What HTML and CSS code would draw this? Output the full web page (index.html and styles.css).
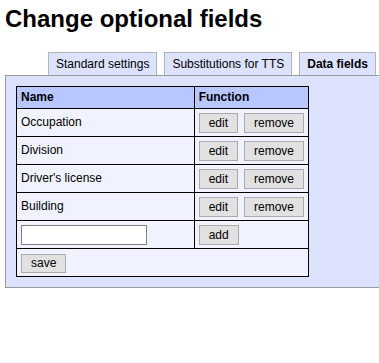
FILE: index.html
```html
<!DOCTYPE html>
<html lang="en">

<head>
  <meta charset="UTF-8">
  <title>Change optional fields</title>
  <link rel="stylesheet" href="styles.css">
</head>

<body>
  <div class="page">
    <h1 class="title">Change optional fields</h1>

    <!-- tabs -->
    <ul class="tabs">
      <li class="tab">Standard settings</li>
      <li class="tab">Substitutions for TTS</li>
      <li class="tab tab-active">Data fields</li>
    </ul>

    <div class="panel">
      <table class="fields">
        <tr>
          <th class="col-name">Name</th>
          <th class="col-func">Function</th>
        </tr>
        <tr>
          <td>Occupation</td>
          <td><div class="actions"><button class="btn">edit</button><button class="btn">remove</button></div></td>
        </tr>
        <tr>
          <td>Division</td>
          <td><div class="actions"><button class="btn">edit</button><button class="btn">remove</button></div></td>
        </tr>
        <tr>
          <td>Driver's license</td>
          <td><div class="actions"><button class="btn">edit</button><button class="btn">remove</button></div></td>
        </tr>
        <tr>
          <td>Building</td>
          <td><div class="actions"><button class="btn">edit</button><button class="btn">remove</button></div></td>
        </tr>
        <tr>
          <td><input class="field-input" type="text"></td>
          <td><div class="actions"><button class="btn">add</button></div></td>
        </tr>
        <tr>
          <td colspan="2"><button class="btn btn-save">save</button></td>
        </tr>
      </table>
    </div>
  </div>
</body>

</html>
```

FILE: styles.css
```css
* {
  margin: 0;
  padding: 0;
  box-sizing: border-box;
}

body {
  font-family: "Liberation Sans", Arial, sans-serif;
  font-size: 12px;
  color: #000;
  background-color: #fff;
}

.page {
  padding: 5px 0 0 5px;
}

.title {
  font-size: 24px;
  font-weight: bold;
  line-height: 27px;
}

/* tabs */
.tabs {
  list-style: none;
  display: flex;
  gap: 7px;
  margin-top: 20px;
  padding-left: 43px;
}

.tab {
  flex-shrink: 0;
  white-space: nowrap;
  height: 23px;
  padding: 4px 7px 0;
  line-height: 15px;
  font-size: 12px;
  background-color: #dde3ff;
  border: 1px solid #b4b4b4;
  border-bottom: none;
}

.tab-active {
  font-weight: bold;
}

/* panel runs off the right edge, so no right border */
.panel {
  padding: 10px;
  background-color: #dde3ff;
  border: 1px solid #9a9a9a;
  border-right: none;
}

/* table */
.fields {
  border-collapse: collapse;
  width: 293px;
}

.fields th,
.fields td {
  border: 1px solid #000;
  padding: 3px 4px;
  text-align: left;
  line-height: 15px;
  background-color: #f0f3ff;
}

.fields th {
  background-color: #b8c7ff;
  font-size: 12px;
}

.fields td {
  height: 28px;
}

.col-name {
  width: 178px;
}

.actions {
  display: flex;
  gap: 6px;
}

.btn {
  height: 20px;
  padding: 0 9px;
  font-family: "Liberation Sans", Arial, sans-serif;
  font-size: 12px;
  color: #000;
  background-color: #e1e1e1;
  border: 1px solid #ababab;
}

.btn-save {
  height: 19px;
  margin-top: 1px;
}

.field-input {
  display: block;
  width: 126px;
  height: 20px;
  border: 1px solid #7f7f7f;
  background-color: #fff;
}
```
